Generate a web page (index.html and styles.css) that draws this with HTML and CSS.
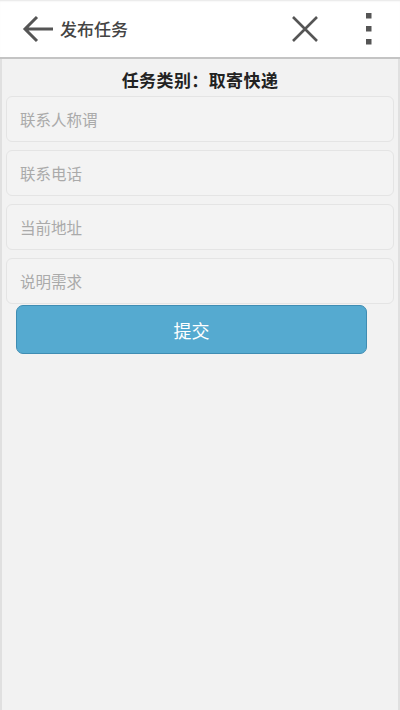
FILE: index.html
```html
<!DOCTYPE html>
<html lang="zh">
<head>
<meta charset="utf-8">
<title>发布任务</title>
<link rel="stylesheet" href="styles.css">
</head>
<body>
<div class="frame">
  <header class="topbar">
    <div class="left">
      <svg class="back" width="32" height="30" viewBox="0 0 32 30"><path d="M15 3 L3 15 L15 27 M3 15 H31" fill="none" stroke="#555" stroke-width="3" stroke-linecap="butt" stroke-linejoin="miter"/></svg>
      <span class="title">发布任务</span>
    </div>
    <div class="right">
      <svg class="close" width="28" height="28" viewBox="0 0 28 28"><path d="M2 2 L26 26 M26 2 L2 26" stroke="#555" stroke-width="2.6" fill="none"/></svg>
      <svg class="more" width="6" height="32" viewBox="0 0 6 32"><rect x="0" y="0" width="5.5" height="5.5" fill="#555"/><rect x="0" y="13" width="5.5" height="5.5" fill="#555"/><rect x="0" y="26" width="5.5" height="5.5" fill="#555"/></svg>
    </div>
  </header>
  <main class="content">
    <h1 class="category">任务类别：取寄快递</h1>
    <form class="form">
      <input class="field" type="text" placeholder="联系人称谓">
      <input class="field" type="text" placeholder="联系电话">
      <input class="field" type="text" placeholder="当前地址">
      <input class="field" type="text" placeholder="说明需求">
      <button class="submit" type="button">提交</button>
    </form>
  </main>
</div>
</body>
</html>
```
FILE: styles.css
```css
html, body {
  margin: 0;
  padding: 0;
  height: 100%;
}
body {
  background: #f2f2f2;
  font-family: "Noto Sans CJK SC", "Noto Sans", sans-serif;
}
.frame {
  min-height: 710px;
  box-sizing: border-box;
  border-left: 2px solid #e0e0e0;
  border-right: 2px solid #e0e0e0;
  background: #f2f2f2;
}
.topbar {
  height: 57px;
  background: #fff;
  border-bottom: 2px solid #c4c4c4;
  display: flex;
  align-items: center;
  justify-content: space-between;
  margin: 0 -2px;
  box-shadow: inset 0 2px 2px -1px #e6e6e6;
}
.left {
  display: flex;
  align-items: center;
  padding-left: 22px;
}
.back {
  display: block;
  margin-right: 6px;
}
.title {
  font-size: 17px;
  color: #444;
  font-weight: 500;
  line-height: 20px;
}
.right {
  display: flex;
  align-items: center;
  padding-right: 28px;
}
.close {
  display: block;
  margin-right: 47px;
}
.more {
  display: block;
}
.content {
  padding: 0 4px;
}
.category {
  margin: 0;
  padding-top: 7px;
  height: 30px;
  line-height: 28px;
  font-size: 17px;
  font-weight: 700;
  color: #222;
  text-align: center;
  letter-spacing: 0.4px;
}
.form {
  display: flex;
  flex-direction: column;
  gap: 8px;
}
.field {
  box-sizing: border-box;
  height: 46px;
  width: 100%;
  margin: 0;
  border: 1px solid #e4e4e4;
  border-radius: 6px;
  background: #f3f3f3;
  padding: 0 13px;
  font-family: "Noto Sans CJK SC", "Noto Sans", sans-serif;
  font-size: 15.5px;
  color: #333;
  outline: none;
}
.field::placeholder {
  color: #aaa;
}
.submit {
  box-sizing: border-box;
  margin: -7px 0 0 10px;
  width: 351px;
  height: 49px;
  border: 1px solid #3f8db3;
  border-radius: 7px;
  background: #55aad0;
  color: #fff;
  font-family: "Noto Sans CJK SC", "Noto Sans", sans-serif;
  font-size: 18px;
  cursor: pointer;
}
```
